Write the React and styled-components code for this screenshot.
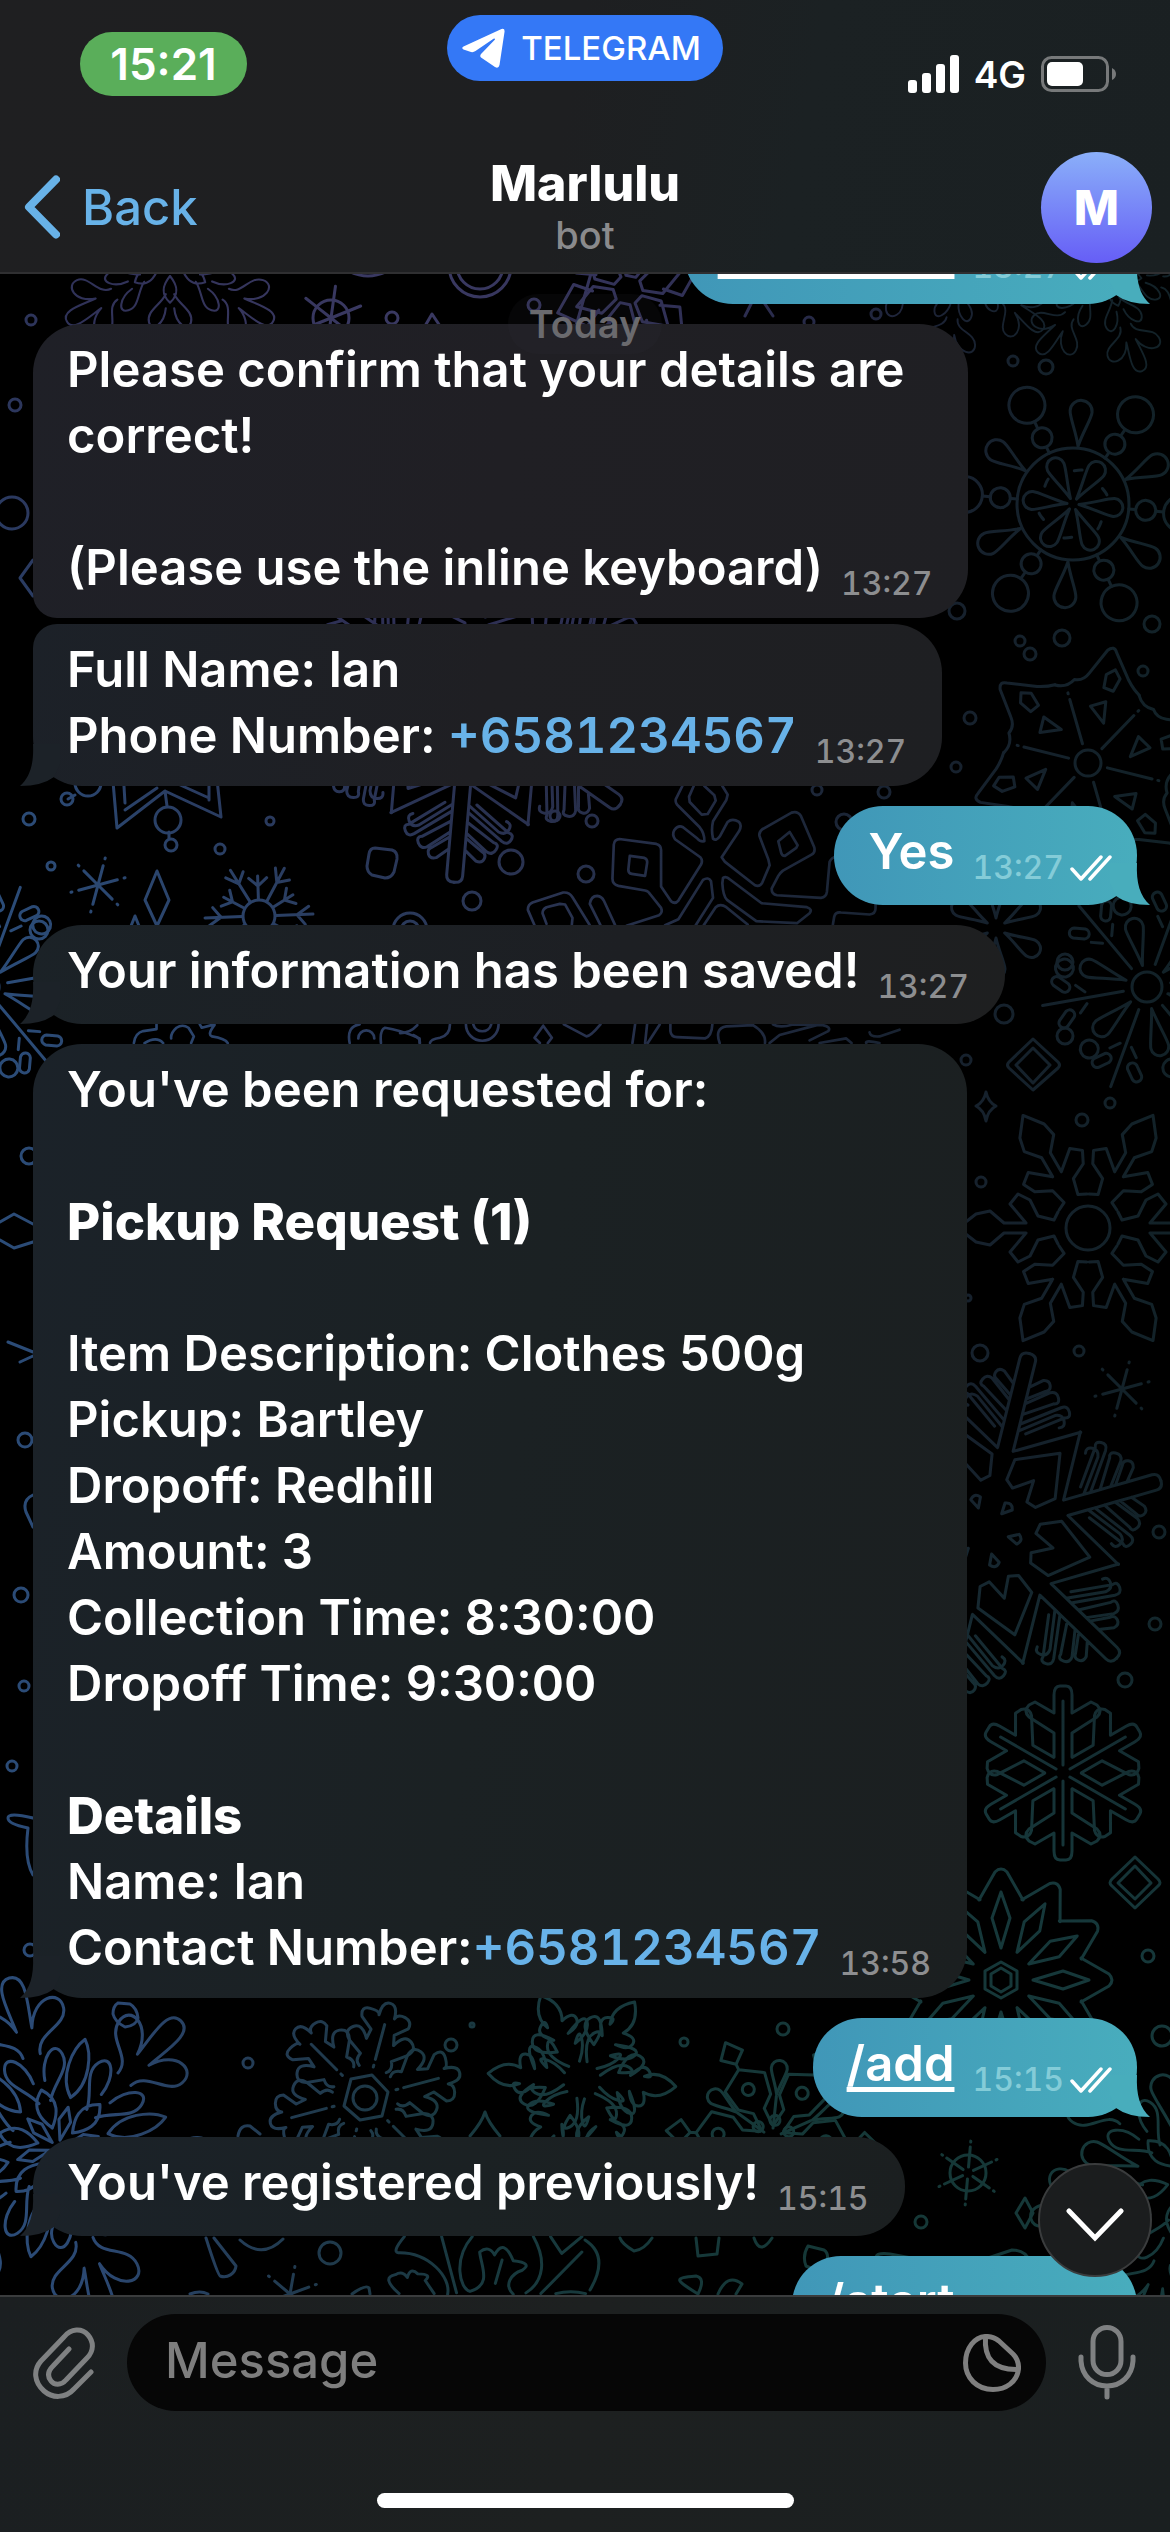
import React from 'react';
import styled, { createGlobalStyle, css } from 'styled-components';

const GlobalStyle = createGlobalStyle`
    * {
        box-sizing: border-box;
    }

    body {
        margin: 0;
        background: #000;
        color: #fff;
        font-family: Inter, "Liberation Sans", sans-serif;
    }

    button {
        border: 0;
        padding: 0;
        background: none;
        color: inherit;
        font: inherit;
    }

    svg {
        display: block;
        flex: none;
    }
`;

const Page = styled.div`
    position: relative;
    display: flex;
    flex-direction: column;
    height: 100vh;
    overflow: hidden;
`;

/* ---------- header ---------- */

const Header = styled.header`
    position: relative;
    flex: none;
    border-bottom: 2px solid #2f2f31;
    background: linear-gradient(100deg, #1f1f21 0%, #1e1f21 48%, #1b2123 68%, #1a2022 100%);
`;

const StatusBar = styled.div`
    display: grid;
    grid-template-columns: 1fr auto 1fr;
    align-items: start;
    height: 142px;
    padding: 15px 54px 0;
`;

const Clock = styled.time`
    justify-self: start;
    width: 167px;
    margin: 17px 0 0 26px;
    border-radius: 32px;
    background: #5aae5a;
    font-size: 44px;
    font-weight: 600;
    line-height: 64px;
    text-align: center;
`;

const ReturnPill = styled.button`
    display: flex;
    align-items: center;
    gap: 16px;
    height: 66px;
    padding: 0 22px 0 15px;
    border-radius: 33px;
    background: #3478f6;
    font-size: 33px;
    font-weight: 500;
`;

const Signals = styled.div`
    display: flex;
    align-items: center;
    justify-self: end;
    gap: 15px;
    height: 40px;
    margin-top: 39px;
    font-size: 37px;
    font-weight: 600;
`;

const NavBar = styled.div`
    display: grid;
    grid-template-columns: 1fr auto 1fr;
    align-items: center;
    height: 130px;
    padding: 0 18px;
`;

const BackButton = styled.button`
    display: flex;
    align-items: center;
    gap: 22px;
    justify-self: start;
    padding-left: 6px;
    color: #68b2e8;
    font-size: 49px;
    font-weight: 500;
`;

const Title = styled.h1`
    margin: 0;
    font-size: 50px;
    font-weight: 800;
    line-height: 56px;
    text-align: center;
`;

const Subtitle = styled.p`
    margin: 0;
    color: #8a8a8c;
    font-size: 38px;
    font-weight: 500;
    line-height: 48px;
    text-align: center;
`;

const Avatar = styled.button`
    justify-self: end;
    width: 111px;
    height: 111px;
    border-radius: 50%;
    background: linear-gradient(#8aaff9, #665ef6);
    font-size: 48px;
    font-weight: 800;
`;

/* ---------- conversation ---------- */

const Chat = styled.main`
    position: relative;
    flex: 1;
    min-height: 0;
    overflow: hidden;
`;

const Messages = styled.div`
    display: flex;
    flex-direction: column;
    align-items: flex-start;
    gap: 20px;
    margin-top: -69px;
    padding: 0 33px;
`;

const Group = styled.div`
    display: flex;
    flex-direction: column;
    align-items: flex-start;
    gap: 6px;
`;

const outgoing = css`
    align-self: flex-end;
    padding-right: 25px;
    background: linear-gradient(90deg, #4097b8, #48adbd);
`;

const Bubble = styled.div`
    position: relative;
    min-height: 99px;
    padding: 13px 36px 17px 34px;
    border-radius: ${props => props.$radius || '49px'};
    background: linear-gradient(100deg, ${props => props.$tint || '#1b2229, #1b2123 50%, #1b1f20'});
    font-size: 49px;
    line-height: 66px;
    ${props => props.$out && outgoing}
`;

const Line = styled.p`
    display: flex;
    align-items: flex-end;
    min-height: 66px;
    margin: 0;
    font-size: ${props => (props.$bold ? '51px' : '49px')};
    font-weight: ${props => (props.$bold ? 800 : 600)};
    white-space: pre;
`;

const Time = styled.time`
    display: flex;
    align-items: center;
    gap: 6px;
    margin-left: 18px;
    color: ${props => (props.$out ? '#84ccd8' : '#8d8e90')};
    font-size: 32px;
    font-weight: 500;
    font-variant-numeric: tabular-nums;
    line-height: 34px;
`;

const Phone = styled.a`
    color: #68b2e8;
    font-variant-numeric: tabular-nums;
    text-decoration: none;
`;

const Command = styled.a`
    color: #fff;
    text-decoration: underline;
    text-decoration-thickness: 5px;
    text-underline-offset: 6px;
`;

const Tail = styled.svg`
    position: absolute;
    bottom: 0;
    ${props => (props.$out ? 'right: -13px; transform: scaleX(-1);' : 'left: -13px;')}
    fill: ${props => (props.$out ? '#48adbc' : '#1c2228')};
`;

const DateBadge = styled.div`
    position: absolute;
    top: 20px;
    left: 0;
    right: 0;
    width: 154px;
    margin: 0 auto;
    border-radius: 30px;
    background: rgba(60, 60, 70, 0.1);
    color: #6a6a6e;
    font-size: 38px;
    font-weight: 600;
    line-height: 60px;
    text-align: center;
`;

const ScrollButton = styled.button`
    position: absolute;
    right: 18px;
    bottom: 18px;
    display: grid;
    place-items: center;
    width: 114px;
    height: 114px;
    padding-top: 10px;
    border: 2px solid #3a3c3d;
    border-radius: 50%;
    background: #1b1d1e;
`;

/* ---------- composer ---------- */

const Footer = styled.footer`
    position: relative;
    flex: none;
    border-top: 2px solid #3a3c3d;
    background: linear-gradient(100deg, #1b1f21, #1d2020 50%, #1a1f20);
`;

const Composer = styled.form`
    display: flex;
    align-items: center;
    gap: 32px;
    padding: 17px 34px 82px 33px;
`;

const Field = styled.div`
    display: flex;
    flex: 1;
    align-items: center;
    height: 97px;
    padding: 0 25px 0 38px;
    border-radius: 49px;
    background: #060606;
`;

const MessageInput = styled.input`
    flex: 1;
    min-width: 0;
    border: 0;
    padding: 0 0 4px;
    outline: 0;
    background: none;
    color: #fff;
    font-family: inherit;
    font-size: 49px;
    font-weight: 500;

    &::placeholder {
        color: #7e7e7e;
        opacity: 1;
    }
`;

const HomeIndicator = styled.div`
    width: 417px;
    height: 15px;
    margin: 0 auto 24px;
    border-radius: 8px;
    background: #fff;
`;

/* ---------- wallpaper ---------- */

const Backdrop = styled.svg`
    position: absolute;
    inset: 0;
    width: 100%;
    height: 100%;
`;

// Repeats one arm, drawn upwards from the centre, round the circle
const Flake = ({ x, y, turn = 0, arms = 6, scale = 1, children }) => (
    <g transform={`translate(${x} ${y}) rotate(${turn}) scale(${scale})`}>
        {Array.from({ length: arms }, (_, i) => (
            <g key={i} transform={`rotate(${(i * 360) / arms})`}>{children}</g>
        ))}
    </g>
);

const Ring = ({ x, y, r }) => <circle cx={x} cy={y} r={r} />;

const drop = (from, to, w) =>
    `M0 ${-from}C${-w / 3} ${-from - (to - from) / 3} ${-w} ${-to + w * 1.6} ${-w} ${-to + w}` +
    `A${w} ${w} 0 0 1 ${w} ${-to + w}C${w} ${-to + w * 1.6} ${w / 3} ${-from - (to - from) / 3} 0 ${-from}Z`;

const FIR_SIDE = 'M69-119L8-84V-105L40-129Q47-132 50-126T47-118' +
    'M8-105V-112L44-138Q50-142 53-136T50-129L16-104' +
    'M8-112V-133L30-150Q36-153 39-147T36-140L8-122M8-133V-150L20-160Q26-162 28-157T25-150L8-138M8-150V-176Q8-183 0-183';

const FIR_CHEVRON = 'M0-108L-28-72L-20-52L-10-50L0-70L10-50L20-52L28-72ZM0-24L-5-34Q0-40 5-34Z';

const DENDRITE_ARM = 'M-9-16V-40L-34-56Q-40-62-34-68L-28-71L-9-60V-78Q-9-87-3-87H3Q9-87 9-78V-60' +
    'L28-71L34-68Q40-62 34-56L9-40V-16M0-8V-72';

const GEAR_ARM = 'M-5-62V-84L-17-98L-14-112L0-130L14-112L17-98L5-84V-62M-5-62L-24-78L-34-70L-28-58L-12-50' +
    'L-8-34L-16-30M5-62L24-78L34-70L28-58L12-50L8-34L16-30';

const FROST_ARM = 'M0-32V-34M0-40V-76M-14-30Q-20-34-16-42L-30-52Q-38-60-30-66T-14-58L-12-68L-24-78Q-28-88-18-88' +
    'T-8-84Q-8-98 0-98T8-84Q10-90 18-88T24-78L12-68L14-58Q22-72 30-66T30-52L16-42Q20-34 14-30';

const LEAF_ARM = 'M-6-18Q-22-36-16-46T-10-36Q-34-44-28-56T-8-48Q-22-60-14-66T-8-62Q-16-78 0-94Q16-78 8-62' +
    'Q22-66 22-58T8-48Q32-60 30-50T10-36Q20-48 18-38T6-18';

const PETAL_ARM = 'M-6-46C-14-62-34-70-30-86S-8-88-6-66M6-46C14-62 34-70 30-86S8-88 6-66' +
    'M-9-92C-10-112-40-108-44-128S-18-148-8-118C-10-140-18-170 0-170S10-140 8-118C18-148 46-146 44-128S10-112 9-92' +
    'M0-20C-8-30-16-44 0-58C16-44 8-30 0-20';

const SPARK_ARM = 'M0 0V-20M0-27V-28';

const Fir = ({ x, y, turn }) => (
    <>
        <Flake x={x} y={y} turn={turn}>
            <path d={FIR_SIDE} />
            <path d={FIR_SIDE} transform="scale(-1 1)" />
        </Flake>
        <Flake x={x} y={y} turn={turn + 30}><path d={FIR_CHEVRON} /></Flake>
    </>
);

const DOTS = [
    [31, 320, 5], [392, 318, 6], [809, 322, 5], [876, 314, 5], [534, 305, 6],
    [1013, 361, 5], [1046, 367, 7], [957, 611, 8], [1020, 641, 5], [1030, 654, 6], [1062, 638, 8],
    [1152, 624, 8], [1143, 671, 5], [970, 718, 6], [956, 767, 5], [15, 405, 6], [12, 513, 16],
    [29, 819, 6], [67, 799, 6], [88, 783, 13], [51, 866, 4], [168, 820, 13], [171, 845, 6], [270, 821, 4],
    [220, 849, 5], [39, 930, 9], [555, 816, 5], [592, 821, 6], [511, 862, 12], [586, 874, 8], [472, 901, 9],
    [817, 790, 5], [884, 792, 6], [844, 822, 8], [1004, 1014, 9], [1065, 1036, 8],
    [966, 1060, 5], [1110, 1103, 5], [1082, 1120, 6], [981, 1182, 5], [1065, 962, 8], [29, 1156, 8],
    [25, 1440, 7], [21, 1595, 7], [24, 1686, 5], [12, 1766, 5], [30, 1950, 6], [980, 1353, 8],
    [1079, 1351, 5], [968, 1298, 3], [1159, 1532, 6], [1155, 1624, 6], [1125, 1680, 7], [1148, 1956, 6],
    [248, 2063, 5], [451, 2045, 6], [472, 2025, 2], [684, 2042, 4], [783, 2029, 6], [330, 2253, 11],
    [921, 2222, 6], [1162, 2036, 10],
];

const Snow = () => (
    <g fill="none" stroke="#fff" strokeWidth="3" strokeLinecap="round" strokeLinejoin="round">
        {DOTS.map(([x, y, r]) => <Ring key={`${x}-${y}`} x={x} y={y} r={r} />)}

        <Flake x={170} y={262}><path d={PETAL_ARM} transform="scale(.7)" /></Flake>
        <Flake x={331} y={318} turn={8}><path d={SPARK_ARM + 'M0-16V-32'} /></Flake>
        <Ring x={331} y={318} r={18} />
        <Ring x={480} y={266} r={31} />
        <Ring x={480} y={266} r={23} />
        <path d="M425 326L432 314L440 326M350 272Q368 280 386 272M576 326L592 270" />
        <Flake x={628} y={290} turn={12}><path d="M-5-14L-14-32L0-54L14-32L5-14ZM-10-34L-22-50L0-74L22-50L10-34" /></Flake>
        <path d="M745 316L757 292L773 316" />
        <Flake x={962} y={262} turn={10}><path d={PETAL_ARM} transform="scale(.62)" /></Flake>
        <Flake x={1106} y={272} turn={-20}><path d={PETAL_ARM} transform="scale(.62)" /></Flake>

        <Flake x={1073} y={504} turn={5}><path d={drop(58, 104, 11)} /></Flake>
        <Flake x={1073} y={504} turn={35}>
            <path d={`${drop(6, 50, 9)}M0-56V-62M0-83V-91`} />
            <Ring x={0} y={-73} r={10} />
            <Ring x={0} y={-109} r={18} />
            <path d="M-18-28Q-14-32-12-33" />
        </Flake>
        <Ring x={1073} y={504} r={56} />

        <Flake x={1088} y={763} turn={-16}>
            <path d="M0-20V-66M0-72V-73M-10-84Q0-78 10-84Q18-80 26-86L50-103Q58-106 58-98L62-68Q64-58 68-51" />
            <path d="M42-80L52-82L54-72L44-62L36-68ZM18-54L34-54L26-34Z" />
        </Flake>
        <Ring x={1088} y={763} r={13} />

        <Flake x={996} y={928}><path d={drop(10, 50, 9)} /></Flake>
        {[1147, -16].map(x => (
            <g key={x}>
                <Ring x={x} y={987} r={15} />
                <Flake x={x} y={987} turn={-12}><path d={drop(22, 70, 9)} /></Flake>
                <Flake x={x} y={987} turn={20}>
                    <path d="M0-24V-106M-6-62L-14-70M6-62L14-70M-10-84L-18-92A5 5 0 0 0-25-85L-17-77A5 5 0 0 0-10-84M10-84L18-92A5 5 0 0 1 25-85L17-77A5 5 0 0 1 10-84" />
                    <Ring x={33} y={-78} r={9} />
                </Flake>
            </g>
        ))}
        <path d="M1033 1039L1058 1062Q1061 1065 1058 1068L1033 1090L1009 1068Q1006 1065 1009 1062ZM1033 1048L1050 1065L1033 1083L1016 1065Z" />
        <path d="M986 1092Q988 1102 996 1106Q988 1110 986 1121Q984 1110 976 1106Q984 1102 986 1092Z" />

        <Ring x={1088} y={1228} r={22} />
        <Flake x={1088} y={1228} turn={30}><path d={GEAR_ARM} /></Flake>

        <Fir x={985} y={1531} turn={14} />
        <Flake x={1122} y={1389} turn={15}><path d={SPARK_ARM} /></Flake>
        <Flake x={1063} y={1773}><path d={DENDRITE_ARM} /></Flake>
        <path d="M1135 1857L1158 1879Q1162 1883 1158 1886L1135 1908L1112 1886Q1108 1883 1112 1879ZM1135 1866L1151 1883L1135 1899L1118 1883Z" />

        <Flake x={1001} y={1980} arms={12}>
            <path d="M-22-80L-6-108Q0-114 6-108L22-80M0-32L9-62L0-88L-9-62Z" />
        </Flake>
        <path d="M1001 1968L1011 1974V1986L1001 1992L991 1986V1974ZM1001 1962L1017 1971V1989L1001 1998L985 1989V1971Z" />

        {/* band between the phone number and the saved notice */}
        <Fir x={470} y={700} turn={5} />
        <Flake x={98} y={885} turn={15}><path d={SPARK_ARM} /></Flake>
        <path d="M157 871L169 900L157 926L145 900ZM131 926L135 916L139 926" />
        <path d="M112 770L117 828L165 791L221 817L216 770M123 770L125 803M125 810L157 788M209 800V770M209 798L178 784M165 791L167 806M169 832V838M75 795L68 799" />
        <Ring x={259} y={916} r={16} />
        <Flake x={259} y={916} turn={28}><path d="M0-17V-54M0-38L-8-50M0-38L10-46" /></Flake>
        <Flake x={259} y={916} turn={-2}><path d="M0-17V-40M0-30L-9-38M0-30L9-38" /></Flake>
        <path d="M375 848L392 850Q398 852 397 859L394 872Q391 878 385 878L372 875Q367 872 367 866L369 854Q370 848 375 848Z" />
        <Ring x={410} y={930} r={17} />
        <Ring x={410} y={930} r={9} />

        <g transform="translate(400 770) scale(.333)" strokeWidth="8">
            <path d="M848 48L828 88Q826 100 836 108L900 172Q915 190 914 214Q900 216 892 205L850 172Q836 164 824 180Q816 194 826 208L902 262Q910 272 904 284L836 392Q826 404 814 394L784 350V240Q784 226 770 222L664 208Q644 206 642 224L638 326Q638 344 656 348L736 362Q746 364 752 374L784 414Q790 428 778 436L680 468" />
            <path d="M968 48L984 74L980 90L940 154Q934 180 940 206Q950 214 960 200L984 156Q998 144 1018 156Q1028 166 1018 184L966 262L976 276L1066 346Q1080 352 1088 338L1110 286L1106 268L1080 200Q1076 188 1088 178L1176 128Q1194 122 1204 138L1244 232Q1248 248 1236 254L1150 302Q1142 308 1136 318L1116 356Q1116 374 1132 376L1264 384Q1280 382 1282 366L1290 276Q1298 258 1316 262" />
            <path d="M882 48L868 80L870 96L906 134L924 132L948 92L944 76L914 48M690 258L734 264Q744 268 742 280L736 318L696 312Q684 310 686 296ZM1136 214L1170 186L1194 226L1190 234L1156 258Q1146 258 1144 246Z" />
            <path d="M796 466L836 448L910 330Q926 320 934 334L940 384L888 466M912 466L948 412Q962 400 980 412L1044 464M970 324Q980 318 990 328L1086 400L1222 412Q1240 418 1230 430L1192 460L1070 454L982 390Q970 378 968 340ZM1300 464L1304 440Q1308 426 1324 428L1410 434Q1428 432 1428 416V400" />
            <path d="M404 466L384 420Q384 404 398 398L490 368Q508 366 518 382L570 466M440 462L428 430Q428 418 440 412L480 402L496 404L518 444L516 464M602 466L570 402Q574 378 592 378Q606 380 612 392L646 466" />
            <path d="M492 764L560 800Q572 800 602 764M706 764L698 820M742 764L736 820M744 820L780 764M812 764V784Q814 802 832 802L916 806Q936 800 938 764M960 820Q944 776 980 770L1060 766Q1100 790 1096 820M1120 764Q1140 776 1180 764L1270 766Q1296 772 1286 784L1230 812M1110 820L1140 796L1260 764M1260 820L1340 806L1356 820M1410 788Q1412 802 1440 800L1500 780M1400 820Q1396 810 1440 820M430 768L404 804L420 820M430 768L456 804L444 820" />
            <path d="M0 790Q30 790 52 766M90 820Q92 808 120 804Q150 796 150 764M60 820Q62 806 40 796M198 764A49 49 0 0 0 296 764M220 764A28 28 0 0 0 274 764" />
        </g>
        <g transform="translate(0 770) scale(.333)" strokeWidth="8">
            <path d="M402 820Q406 790 430 784L470 778V764M434 820Q470 798 490 820M514 806Q512 790 530 774Q548 762 566 774L582 800L574 820M600 764L606 774L644 764M644 766Q622 794 636 800Q676 806 684 820M1050 820Q1040 770 1080 764M1076 806A24 24 0 0 1 1124 806M1144 820Q1140 780 1156 774Q1200 780 1260 806V820" />
        </g>

        {/* left edge */}
        <path d="M0 1222L14 1214L33 1224M0 1240L14 1248L33 1242M8 1342L33 1352M20 1362L33 1356M33 1495Q22 1500 26 1512L33 1527M33 1818Q8 1812 8 1818T28 1828Q24 1860 33 1875" />
        <path d="M33 560L20 578L33 596" />

        {/* bottom band */}
        <Flake x={58} y={2148} turn={44}><path d={PETAL_ARM} transform="scale(1 1.04)" /></Flake>
        <Flake x={58} y={2148} turn={14}>
            <path d="M0-52C-16-70-10-100 0-112C10-100 16-70 0-52M0-8L-6-28L0-42L6-28Z" />
        </Flake>
        <path d="M118 2003L130 2004Q137 2008 138 2018Q136 2026 125 2027Q115 2022 113 2014Q113 2006 118 2003M238 2136Q240 2124 250 2126L260 2134" />
        <Flake x={365} y={2098} turn={15}><path d={FROST_ARM} /></Flake>
        <path d="M351 2079L372 2075L388 2092L382 2116L360 2120L344 2106Z" />
        <Ring x={365} y={2098} r={12} />
        <path d="M470 2136Q482 2122 485 2112Q488 2122 500 2136" />
        <Flake x={582} y={2080} turn={34}><path d={LEAF_ARM} /></Flake>
        <Flake x={290} y={2294} turn={10}><path d={SPARK_ARM} /></Flake>
        <path d="M283 2239Q262 2260 240 2240M206 2238Q218 2276 220 2276A12 12 0 0 0 236 2266L214 2238M352 2294Q366 2284 369 2288L370 2294M190 2294Q200 2290 208 2294" />
        <g transform="translate(0 1960) scale(.373 .365)" strokeWidth="8">
            <path d="M1084 758Q1050 800 1068 802C1150 800 1210 870 1200 916M1184 758L1224 912M1266 758C1214 820 1232 900 1260 908C1320 890 1290 840 1286 800Q1310 780 1326 808Q1350 760 1376 824Q1430 830 1400 850C1370 860 1350 890 1376 916M1430 758C1464 820 1460 880 1410 912M1476 758L1506 804L1560 758M1450 914L1560 800M1346 822L1328 886M1070 914Q1020 870 1060 862Q1080 850 1092 870Q1100 840 1120 860Q1160 860 1140 878L1164 914M1490 914Q1530 904 1570 914" />
        </g>
        <Flake x={772} y={2138} turn={6}>
            <path d={`${drop(44, 78, 8)}M0-10V-42`} />
            <Ring x={16} y={-8} r={5} />
        </Flake>
        <Flake x={772} y={2138} turn={-26}>
            <path d="M-6-12V-30L-18-40L-22-62L0-76L22-62L18-40L6-30V-12M0-76V-82M-12-92L0-106L12-92L0-82Z" />
            <Ring x={0} y={-54} r={6} />
        </Flake>
        <Ring x={968} y={2173} r={18} />
        <Flake x={968} y={2173} turn={5}><path d="M0-6V-26M0-31V-32" /></Flake>
        <path d="M1025 2198L1033 2213L1025 2228L1016 2213Z" />
        <Flake x={1186} y={2180} turn={-44}><path d={PETAL_ARM} transform="scale(.94)" /></Flake>
        <Flake x={1186} y={2180} turn={-14}><path d={drop(50, 108, 12)} /></Flake>
        <path d="M585 2240Q610 2256 590 2290M620 2238Q622 2244 634 2251Q644 2250 652 2238M696 2238L698 2256L717 2254L719 2238M754 2238Q760 2256 772 2238M808 2246L824 2250Q830 2254 826 2264L820 2272L806 2266Q802 2256 808 2246M698 2294C676 2280 672 2278 696 2276Q706 2278 698 2294M718 2294C724 2280 732 2276 742 2284L736 2294M876 2258Q876 2252 890 2254L922 2260M982 2260L1012 2250Q1026 2250 1030 2262" />
    </g>
);

const Wallpaper = () => (
    <Backdrop viewBox="0 0 1170 2532" preserveAspectRatio="xMidYMid slice" aria-hidden="true">
        <defs>
            <linearGradient id="sky">
                <stop offset="0" stopColor="#2b4c78" />
                <stop offset=".45" stopColor="#2a3452" />
                <stop offset=".8" stopColor="#17212e" />
                <stop offset="1" stopColor="#122228" />
            </linearGradient>
            <radialGradient id="dusk" gradientUnits="userSpaceOnUse" cx="400" cy="280" r="640">
                <stop offset="0" stopColor="#3b3a63" />
                <stop offset=".5" stopColor="#302f55" stopOpacity=".9" />
                <stop offset="1" stopColor="#22223e" stopOpacity="0" />
            </radialGradient>
            <radialGradient id="pine" gradientUnits="userSpaceOnUse" cx="860" cy="2200" r="760">
                <stop offset="0" stopColor="#153836" />
                <stop offset=".5" stopColor="#163a3c" stopOpacity=".9" />
                <stop offset="1" stopColor="#153234" stopOpacity="0" />
            </radialGradient>
            <mask id="snow" maskUnits="userSpaceOnUse" x="0" y="0" width="1170" height="2532">
                <Snow />
            </mask>
        </defs>
        <g mask="url(#snow)">
            <rect width="1170" height="2532" fill="url(#sky)" />
            <rect width="1170" height="2532" fill="url(#dusk)" />
            <rect width="1170" height="2532" fill="url(#pine)" />
        </g>
    </Backdrop>
);

/* ---------- icons ---------- */

const PlaneIcon = () => (
    <svg width="43" height="40" viewBox="0 0 43 40" fill="#fff">
        <path d="M1.500 18.500 39.500 1Q43 0 42.500 4L37.500 37Q36.500 41 33 39L19 29.500Q17.500 28 19 26L33 11.500Q33 10 31.500 10.700L13.500 23Q11.500 24.500 9 24L1.500 21.500Q-1 20 1.500 18.500Z" />
    </svg>
);

const SignalIcon = () => (
    <svg width="51" height="38" viewBox="0 0 51 38" fill="#fff">
        <rect y="25" width="9" height="13" rx="3" />
        <rect x="14" y="18" width="9" height="20" rx="3" />
        <rect x="28" y="9" width="9" height="29" rx="3" />
        <rect x="42" width="9" height="38" rx="3" />
    </svg>
);

const BatteryIcon = () => (
    <svg width="75" height="36" viewBox="0 0 75 36">
        <rect x="1.500" y="1.500" width="65" height="33" rx="9" fill="none" stroke="#77797a" strokeWidth="3" />
        <rect x="6" y="6" width="36" height="24" rx="5" fill="#fff" />
        <path d="M71 12Q75 14 75 18T71 24Z" fill="#77797a" />
    </svg>
);

const ChevronLeft = () => (
    <svg width="36" height="64" viewBox="0 0 36 64" fill="none" stroke="currentColor" strokeWidth="8" strokeLinecap="round" strokeLinejoin="round">
        <path d="M32 4.500 5 32 32 59.500" />
    </svg>
);

const ChevronDown = () => (
    <svg width="60" height="34" viewBox="0 0 60 34" fill="none" stroke="#fff" strokeWidth="5" strokeLinecap="round">
        <path d="M4 3 30 30 56 3" />
    </svg>
);

const Checks = () => (
    <svg width="42" height="26" viewBox="0 0 42 26" fill="none" stroke="#fff" strokeWidth="3.5" strokeLinecap="round" strokeLinejoin="round">
        <path d="M2 14L11 24L31 2" />
        <path d="M20 24L40 2" />
    </svg>
);

const ClipIcon = () => (
    <svg width="62" height="72" viewBox="0 0 62 72" fill="none" stroke="#7f8182" strokeWidth="5" strokeLinecap="round" strokeLinejoin="round">
        <path d="M58 45L41 62C32 72 19 71 11 64C1 55 0 43 8 34L31 10C38 1 49 1 55 8C61 15 61 24 54 31L33 53C28 59 21 58 18 54C14 49 15 44 20 39L36 22" />
    </svg>
);

const StickerIcon = () => (
    <svg width="58" height="58" viewBox="0 0 58 58" fill="none" stroke="#7f7f7f" strokeWidth="5" strokeLinejoin="round">
        <path d="M22 2.500Q30 2 36 7L50 20Q56 26 55.500 35C54 48 43 55.500 30 55.500C14 55.500 2.500 44 2.500 29C2.500 14 12 3 22 2.500Z" />
        <path d="M22.500 3C21 24 30 36 54.500 35.500" />
    </svg>
);

const MicIcon = () => (
    <svg width="58" height="75" viewBox="0 0 58 75" fill="none" stroke="#7f8182" strokeWidth="5" strokeLinecap="round">
        <rect x="15" y="2.500" width="28" height="47" rx="14" />
        <path d="M3 32V36C4 51 15 61 29 61S54 51 55 36V32M29 61V72" />
    </svg>
);

/* ---------- messages ---------- */

const Message = ({ lines, time, out, tail = true, radius, tint }) => (
    <Bubble $out={out} $radius={radius} $tint={tint}>
        {tail && (
            <Tail $out={out} width="52" height="42" viewBox="0 0 52 42" aria-hidden="true">
                <path d="M13 0C14 20 10 33 0 42Q22 42 34 33L40 20V0Z" />
            </Tail>
        )}
        {lines.map((line, i) => (
            <Line key={i} $bold={line.bold}>
                <span>
                    {line.text}
                    {line.phone && <Phone href={`tel:${line.phone}`}>{line.phone}</Phone>}
                    {line.command && <Command href="#command">{line.command}</Command>}
                </span>
                {i === lines.length - 1 && (
                    <Time $out={out}>
                        {time}
                        {out && <Checks />}
                    </Time>
                )}
            </Line>
        ))}
    </Bubble>
);

const request = [
    { text: "You've been requested for:" },
    { text: '' },
    { text: 'Pickup Request (1)', bold: true },
    { text: '' },
    { text: 'Item Description: Clothes 500g' },
    { text: 'Pickup: Bartley' },
    { text: 'Dropoff: Redhill' },
    { text: 'Amount: 3' },
    { text: 'Collection Time: 8:30:00' },
    { text: 'Dropoff Time: 9:30:00' },
    { text: '' },
    { text: 'Details', bold: true },
    { text: 'Name: Ian' },
    { text: 'Contact Number:', phone: '+6581234567' },
];

const App = () => (
    <Page>
        <GlobalStyle />
        <Wallpaper />

        <Header>
            <StatusBar>
                <Clock>15:21</Clock>
                <ReturnPill type="button"><PlaneIcon />TELEGRAM</ReturnPill>
                <Signals><SignalIcon />4G<BatteryIcon /></Signals>
            </StatusBar>
            <NavBar>
                <BackButton type="button"><ChevronLeft />Back</BackButton>
                <div>
                    <Title>Marlulu</Title>
                    <Subtitle>bot</Subtitle>
                </div>
                <Avatar type="button">M</Avatar>
            </NavBar>
        </Header>

        <Chat>
            <Messages>
                <Message out time="13:27" lines={[{ command: '81234567' }]} />
                <Group>
                    <Message
                        tail={false}
                        radius="49px 49px 49px 24px"
                        tint="#1f2027, #201f24 50%, #1f1f23"
                        time="13:27"
                        lines={[
                            { text: 'Please confirm that your details are' },
                            { text: 'correct!' },
                            { text: '' },
                            { text: '(Please use the inline keyboard)' },
                        ]}
                    />
                    <Message
                        radius="24px 49px 49px 49px"
                        tint="#1c2128, #1f1f23 50%, #1e1f22"
                        time="13:27"
                        lines={[
                            { text: 'Full Name: Ian' },
                            { text: 'Phone Number: ', phone: '+6581234567' },
                        ]}
                    />
                </Group>
                <Message out time="13:27" lines={[{ text: 'Yes' }]} />
                <Message tint="#1b2227, #1d1f23 60%, #1e1f20" time="13:27" lines={[{ text: 'Your information has been saved!' }]} />
                <Message time="13:58" lines={request} />
                <Message out time="15:15" lines={[{ command: '/add' }]} />
                <Message time="15:15" lines={[{ text: "You've registered previously!" }]} />
                <Message out time="15:21" lines={[{ command: '/start' }]} />
            </Messages>
            <DateBadge>Today</DateBadge>
            <ScrollButton type="button" aria-label="Scroll to latest message"><ChevronDown /></ScrollButton>
        </Chat>

        <Footer>
            <Composer onSubmit={e => e.preventDefault()}>
                <button type="button" aria-label="Attach"><ClipIcon /></button>
                <Field>
                    <MessageInput type="text" placeholder="Message" aria-label="Message" />
                    <button type="button" aria-label="Stickers"><StickerIcon /></button>
                </Field>
                <button type="button" aria-label="Record voice message"><MicIcon /></button>
            </Composer>
            <HomeIndicator />
        </Footer>
    </Page>
);

export default App;
